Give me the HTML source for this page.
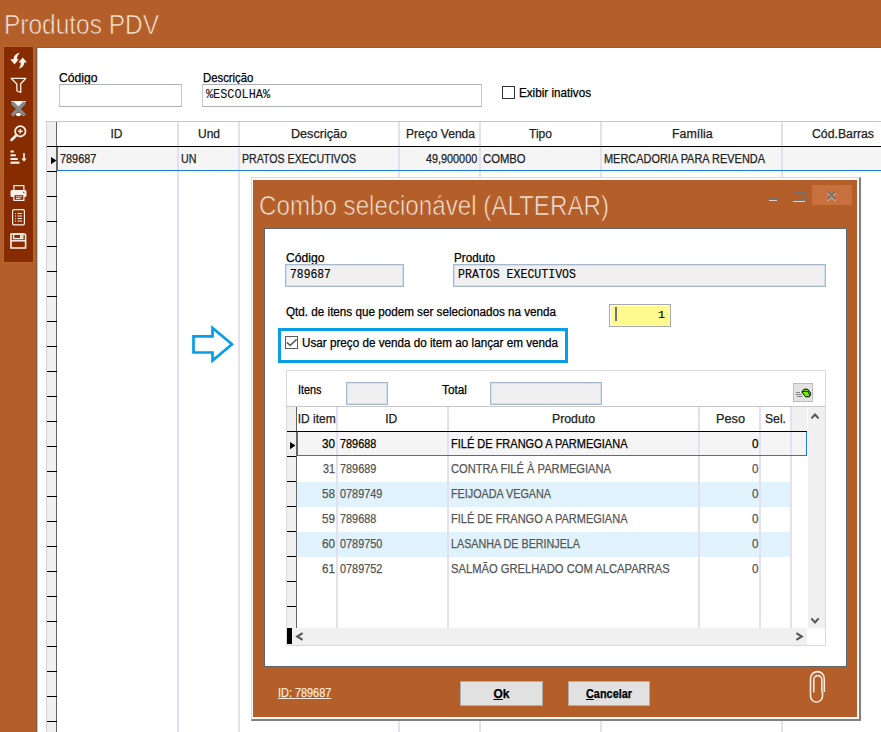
<!DOCTYPE html>
<html><head><meta charset="utf-8"><style>
html,body{margin:0;padding:0;}
body{width:881px;height:732px;overflow:hidden;position:relative;background:#b45e2a;font-family:"Liberation Sans",sans-serif;}
div{box-sizing:border-box;}

</style></head><body>
<div style="position:absolute;left:4.00px;top:12.14px;font:normal 27px 'Liberation Sans', sans-serif;line-height:1;white-space:pre;color:#f7e9de;transform-origin:0 0;transform:scaleX(0.9059);-webkit-text-stroke:0.7px #b45e2a">Produtos PDV</div>
<div style="position:absolute;left:3px;top:46px;width:31px;height:217px;background:#b96430"></div>
<div style="position:absolute;left:4px;top:47px;width:29px;height:215px;background:#862c00"></div>
<svg style="position:absolute;left:0;top:0" width="40" height="270">
<path d="M19.8,52.8 C15.8,53.4 13.6,56 13.6,59.3 L10.2,59.3 L14.5,64.6 L18.8,59.3 L16.9,59.3 C16.9,56.8 18,54.6 19.8,52.8 Z" fill="#fbf1ea"/>
<path d="M18.3,68.8 C22.3,68 24.3,65.6 24.2,62.6 L26.9,62.6 L22.8,57.6 L18.5,62.6 L20.8,62.6 C20.8,65.2 20.1,67.2 18.3,68.8 Z" fill="#fbf1ea"/>
<path d="M11.2,78.3 L25.8,78.3 L20.6,84 L20.8,92.3 L17,91 L16.8,84 Z" fill="none" stroke="#fbf1ea" stroke-width="1.3" stroke-linejoin="round"/>
<path d="M10.7,101 L26.5,101 L18.6,107 Z" fill="#fff"/>
<ellipse cx="18.5" cy="114.5" rx="2.6" ry="1.8" fill="#fff"/>
<path d="M12,102.5 L24.8,115.5 M24.8,102.5 L12,115.5" stroke="#888" stroke-width="3.6"/>
<circle cx="20.3" cy="131.3" r="5.2" fill="none" stroke="#fbf1ea" stroke-width="1.8"/>
<path d="M20.3,129 L20.3,133.6 M18,131.3 L22.6,131.3" stroke="#fbf1ea" stroke-width="1.4"/>
<path d="M16.6,135 L11.5,140" stroke="#fbf1ea" stroke-width="2.5" stroke-linecap="round"/>
<rect x="10.5" y="150.5" width="3.3" height="2" fill="#fbf1ea"/>
<rect x="10.5" y="154.3" width="5.3" height="2" fill="#fbf1ea"/>
<rect x="10.5" y="158" width="7.2" height="2" fill="#fbf1ea"/>
<rect x="10.5" y="161.6" width="9" height="2.2" fill="#fbf1ea"/>
<rect x="23.2" y="153" width="1.6" height="6" fill="#fbf1ea"/>
<path d="M21.4,158.5 L26.6,158.5 L24,161.8 Z" fill="#fbf1ea"/>
<rect x="13.9" y="185.6" width="10" height="5" fill="none" stroke="#fbf1ea" stroke-width="1.2"/>
<rect x="10.5" y="190" width="16" height="7" rx="1.5" fill="#fbf1ea"/>
<circle cx="23.8" cy="192.3" r="0.8" fill="#862c00"/>
<rect x="13.9" y="194.6" width="10" height="5.8" fill="#862c00" stroke="#fbf1ea" stroke-width="1.2"/>
<path d="M16,196.8 h6 M16,198.5 h4.5" stroke="#fbf1ea" stroke-width="0.9"/>
<rect x="12.6" y="209.6" width="11.8" height="15.2" rx="1.3" fill="none" stroke="#fbf1ea" stroke-width="1.2"/>
<path d="M15,213.5 h1 M17.5,213.5 h4.5 M15,216 h1 M17.5,216 h4.5 M15,218.5 h1 M17.5,218.5 h4.5 M15,221 h1 M17.5,221 h4.5" stroke="#fbf1ea" stroke-width="1.1"/>
<path d="M11,234 L24.6,234 L25.6,235 L25.6,248 L11,248 Z" fill="none" stroke="#fbf1ea" stroke-width="1.6"/>
<rect x="13.6" y="234" width="9.2" height="4.6" fill="none" stroke="#fbf1ea" stroke-width="1.4"/>
<rect x="20" y="235" width="1.8" height="3" fill="#fbf1ea"/>
<path d="M11,240.8 h14.6" stroke="#fbf1ea" stroke-width="1.5"/>
</svg>
<div style="position:absolute;left:36px;top:47px;width:845px;height:685px;background:#fff;border-left:1px solid #7c5a48;border-top:1px solid #6b6b6b"></div>
<div style="position:absolute;left:37px;top:48px;width:1px;height:684px;background:#c4cad0"></div>
<div style="position:absolute;left:59.00px;top:71.84px;font:normal 12px 'Liberation Sans', sans-serif;line-height:1;white-space:pre;color:#000;transform-origin:0 0;transform:scaleX(1.0150);-webkit-text-stroke:0.25px #000;">Código</div>
<div style="position:absolute;left:59px;top:84px;width:123px;height:23px;background:#fff;border:1px solid #c6c8ce;border-top-color:#adb0b6;border-bottom-color:#adb0b6"></div>
<div style="position:absolute;left:203.00px;top:71.84px;font:normal 12px 'Liberation Sans', sans-serif;line-height:1;white-space:pre;color:#000;transform-origin:0 0;transform:scaleX(0.9445);-webkit-text-stroke:0.25px #000;">Descrição</div>
<div style="position:absolute;left:202px;top:84px;width:280px;height:23px;background:#fff;border:1px solid #c6c8ce;border-top-color:#adb0b6;border-bottom-color:#adb0b6"></div>
<div style="position:absolute;left:206.00px;top:88.65px;font:normal 12.2px 'Liberation Mono', monospace;line-height:1;white-space:pre;color:#111;transform-origin:0 0;transform:scaleX(0.9722);-webkit-text-stroke:0.1px #111;">%ESCOLHA%</div>
<div style="position:absolute;left:502px;top:86px;width:13px;height:13px;background:#fff;border:1px solid #333"></div>
<div style="position:absolute;left:518.50px;top:87.34px;font:normal 12px 'Liberation Sans', sans-serif;line-height:1;white-space:pre;color:#000;transform-origin:0 0;transform:scaleX(0.9726);-webkit-text-stroke:0.25px #000;">Exibir inativos</div>
<div style="position:absolute;left:46px;top:121px;width:835px;height:611px;background:#fff;border-left:1px solid #cfd2d8;border-top:1px solid #c8c8c8"></div>
<div style="position:absolute;left:47px;top:122px;width:10px;height:611px;background:#f0f0f0"></div>
<div style="position:absolute;left:56px;top:122px;width:1px;height:611px;background:#646464"></div>
<div style="position:absolute;left:177px;top:122px;width:2px;height:611px;background:#e4dff1"></div>
<div style="position:absolute;left:238px;top:122px;width:2px;height:611px;background:#e4dff1"></div>
<div style="position:absolute;left:398px;top:122px;width:2px;height:611px;background:#e4dff1"></div>
<div style="position:absolute;left:479px;top:122px;width:2px;height:611px;background:#e4dff1"></div>
<div style="position:absolute;left:600px;top:122px;width:2px;height:611px;background:#e4dff1"></div>
<div style="position:absolute;left:781px;top:122px;width:2px;height:611px;background:#e4dff1"></div>
<div style="position:absolute;left:47px;top:146px;width:834px;height:1px;background:#000"></div>
<div style="position:absolute;left:57px;top:147px;width:824px;height:24px;background:#f5f5f5"></div>
<div style="position:absolute;left:177px;top:147px;width:2px;height:23px;background:#e4dff1"></div>
<div style="position:absolute;left:238px;top:147px;width:2px;height:23px;background:#e4dff1"></div>
<div style="position:absolute;left:398px;top:147px;width:2px;height:23px;background:#e4dff1"></div>
<div style="position:absolute;left:479px;top:147px;width:2px;height:23px;background:#e4dff1"></div>
<div style="position:absolute;left:600px;top:147px;width:2px;height:23px;background:#e4dff1"></div>
<div style="position:absolute;left:781px;top:147px;width:2px;height:23px;background:#e4dff1"></div>
<div style="position:absolute;left:57px;top:170px;width:824px;height:1px;background:#1a7fd4"></div>
<div style="position:absolute;left:57px;top:147px;width:1px;height:24px;background:#1a7fd4"></div>
<div style="position:absolute;left:47px;top:171px;width:10px;height:1px;background:#000"></div>
<div style="position:absolute;left:47px;top:196px;width:10px;height:1px;background:#000"></div>
<div style="position:absolute;left:47px;top:221px;width:10px;height:1px;background:#000"></div>
<div style="position:absolute;left:47px;top:246px;width:10px;height:1px;background:#000"></div>
<div style="position:absolute;left:47px;top:271px;width:10px;height:1px;background:#000"></div>
<div style="position:absolute;left:47px;top:296px;width:10px;height:1px;background:#000"></div>
<div style="position:absolute;left:47px;top:321px;width:10px;height:1px;background:#000"></div>
<div style="position:absolute;left:47px;top:346px;width:10px;height:1px;background:#000"></div>
<div style="position:absolute;left:47px;top:371px;width:10px;height:1px;background:#000"></div>
<div style="position:absolute;left:47px;top:396px;width:10px;height:1px;background:#000"></div>
<div style="position:absolute;left:47px;top:421px;width:10px;height:1px;background:#000"></div>
<div style="position:absolute;left:47px;top:446px;width:10px;height:1px;background:#000"></div>
<div style="position:absolute;left:47px;top:471px;width:10px;height:1px;background:#000"></div>
<div style="position:absolute;left:47px;top:496px;width:10px;height:1px;background:#000"></div>
<div style="position:absolute;left:47px;top:521px;width:10px;height:1px;background:#000"></div>
<div style="position:absolute;left:47px;top:546px;width:10px;height:1px;background:#000"></div>
<div style="position:absolute;left:47px;top:571px;width:10px;height:1px;background:#000"></div>
<div style="position:absolute;left:47px;top:596px;width:10px;height:1px;background:#000"></div>
<div style="position:absolute;left:47px;top:621px;width:10px;height:1px;background:#000"></div>
<div style="position:absolute;left:47px;top:646px;width:10px;height:1px;background:#000"></div>
<div style="position:absolute;left:47px;top:671px;width:10px;height:1px;background:#000"></div>
<div style="position:absolute;left:47px;top:696px;width:10px;height:1px;background:#000"></div>
<div style="position:absolute;left:47px;top:721px;width:10px;height:1px;background:#000"></div>
<svg style="position:absolute;left:51px;top:156.8px" width="6" height="8"><polygon points="0,0 5.5,3.6 0,7.2" fill="#000"/></svg>
<div style="position:absolute;left:110.50px;top:128.34px;font:normal 12px 'Liberation Sans', sans-serif;line-height:1;white-space:pre;color:#222;transform-origin:0 0;-webkit-text-stroke:0.25px #222;">ID</div>
<div style="position:absolute;left:197.99px;top:128.34px;font:normal 12px 'Liberation Sans', sans-serif;line-height:1;white-space:pre;color:#222;transform-origin:0 0;-webkit-text-stroke:0.25px #222;">Und</div>
<div style="position:absolute;left:291.30px;top:128.34px;font:normal 12px 'Liberation Sans', sans-serif;line-height:1;white-space:pre;color:#222;transform-origin:0 0;transform:scaleX(1.0495);-webkit-text-stroke:0.25px #222;">Descrição</div>
<div style="position:absolute;left:405.50px;top:128.34px;font:normal 12px 'Liberation Sans', sans-serif;line-height:1;white-space:pre;color:#222;transform-origin:0 0;transform:scaleX(1.0041);-webkit-text-stroke:0.25px #222;">Preço Venda</div>
<div style="position:absolute;left:529.05px;top:128.34px;font:normal 12px 'Liberation Sans', sans-serif;line-height:1;white-space:pre;color:#222;transform-origin:0 0;-webkit-text-stroke:0.25px #222;">Tipo</div>
<div style="position:absolute;left:671.70px;top:128.34px;font:normal 12px 'Liberation Sans', sans-serif;line-height:1;white-space:pre;color:#222;transform-origin:0 0;transform:scaleX(1.0319);-webkit-text-stroke:0.25px #222;">Família</div>
<div style="position:absolute;left:812.00px;top:128.34px;font:normal 12px 'Liberation Sans', sans-serif;line-height:1;white-space:pre;color:#222;transform-origin:0 0;transform:scaleX(1.0214);-webkit-text-stroke:0.25px #222;">Cód.Barras</div>
<div style="position:absolute;left:60.00px;top:153.42px;font:normal 12.5px 'Liberation Sans', sans-serif;line-height:1;white-space:pre;color:#222;transform-origin:0 0;transform:scaleX(0.8701);-webkit-text-stroke:0.25px #222;">789687</div>
<div style="position:absolute;left:181.00px;top:153.42px;font:normal 12.5px 'Liberation Sans', sans-serif;line-height:1;white-space:pre;color:#222;transform-origin:0 0;transform:scaleX(0.8581);-webkit-text-stroke:0.25px #222;">UN</div>
<div style="position:absolute;left:242.00px;top:153.42px;font:normal 12.5px 'Liberation Sans', sans-serif;line-height:1;white-space:pre;color:#222;transform-origin:0 0;transform:scaleX(0.8489);-webkit-text-stroke:0.25px #222;">PRATOS EXECUTIVOS</div>
<div style="position:absolute;left:426.20px;top:153.42px;font:normal 12.5px 'Liberation Sans', sans-serif;line-height:1;white-space:pre;color:#222;transform-origin:0 0;transform:scaleX(0.8664);-webkit-text-stroke:0.25px #222;">49,900000</div>
<div style="position:absolute;left:483.00px;top:153.42px;font:normal 12.5px 'Liberation Sans', sans-serif;line-height:1;white-space:pre;color:#222;transform-origin:0 0;transform:scaleX(0.9019);-webkit-text-stroke:0.25px #222;">COMBO</div>
<div style="position:absolute;left:604.00px;top:153.42px;font:normal 12.5px 'Liberation Sans', sans-serif;line-height:1;white-space:pre;color:#222;transform-origin:0 0;transform:scaleX(0.8757);-webkit-text-stroke:0.25px #222;">MERCADORIA PARA REVENDA</div>
<div style="position:absolute;left:251px;top:177px;width:610px;height:544px;background:#fbfbfb;border-top:1px solid #dcdcdc;border-left:1px solid #dcdcdc;border-right:2px solid #808080;border-bottom:2px solid #808080"></div>
<div style="position:absolute;left:253px;top:180px;width:604px;height:537px;background:#b45e2a"></div>
<div style="position:absolute;left:259.00px;top:193.14px;font:normal 27px 'Liberation Sans', sans-serif;line-height:1;white-space:pre;color:#f7e9de;transform-origin:0 0;transform:scaleX(0.8948);-webkit-text-stroke:0.7px #b45e2a">Combo selecionável (ALTERAR)</div>
<div style="position:absolute;left:812px;top:185px;width:40px;height:20px;background:#c8703e"></div>
<div style="position:absolute;left:769px;top:200px;width:8px;height:1px;background:rgba(255,255,255,0.7)"></div>
<div style="position:absolute;left:769px;top:198px;width:8px;height:2px;background:#727272"></div>
<div style="position:absolute;left:793px;top:200px;width:12px;height:1.5px;background:rgba(255,255,255,0.7)"></div>
<div style="position:absolute;left:793px;top:191px;width:12px;height:9.5px;border:1px solid #727272;border-top-width:2px"></div>
<svg style="position:absolute;left:826px;top:190px" width="12" height="12"><path d="M1.5,2.5 L9.5,10.5 M9.5,2.5 L1.5,10.5" stroke="rgba(255,255,255,0.6)" stroke-width="2"/><path d="M1.5,1.5 L9.5,9.5 M9.5,1.5 L1.5,9.5" stroke="#727272" stroke-width="2"/></svg>
<div style="position:absolute;left:264px;top:228px;width:583px;height:439px;background:#fff;border:1px solid #5f666c"></div>
<div style="position:absolute;left:286.00px;top:251.84px;font:normal 12px 'Liberation Sans', sans-serif;line-height:1;white-space:pre;color:#000;transform-origin:0 0;transform:scaleX(1.0123);-webkit-text-stroke:0.25px #000;">Código</div>
<div style="position:absolute;left:285px;top:264px;width:119px;height:23px;background:#f0f0f0;border:1px solid #a7b8cc;box-shadow:inset 0 0 0 1px #d3dfec"></div>
<div style="position:absolute;left:290.00px;top:268.50px;font:normal 12.4px 'Liberation Mono', monospace;line-height:1;white-space:pre;color:#000;transform-origin:0 0;transform:scaleX(0.9165);-webkit-text-stroke:0.15px #000;">789687</div>
<div style="position:absolute;left:453.50px;top:251.84px;font:normal 12px 'Liberation Sans', sans-serif;line-height:1;white-space:pre;color:#000;transform-origin:0 0;transform:scaleX(0.9755);-webkit-text-stroke:0.25px #000;">Produto</div>
<div style="position:absolute;left:453px;top:264px;width:373px;height:23px;background:#f0f0f0;border:1px solid #a7b8cc;box-shadow:inset 0 0 0 1px #d3dfec"></div>
<div style="position:absolute;left:457.70px;top:268.50px;font:normal 12.4px 'Liberation Mono', monospace;line-height:1;white-space:pre;color:#000;transform-origin:0 0;transform:scaleX(0.9335);-webkit-text-stroke:0.15px #000;">PRATOS EXECUTIVOS</div>
<div style="position:absolute;left:286.00px;top:306.34px;font:normal 12px 'Liberation Sans', sans-serif;line-height:1;white-space:pre;color:#000;transform-origin:0 0;transform:scaleX(0.9729);-webkit-text-stroke:0.25px #000;">Qtd. de itens que podem ser selecionados na venda</div>
<div style="position:absolute;left:609px;top:304px;width:62px;height:23px;background:#fffa90;border:1px solid #a8a8b0;box-shadow:inset 0 0 0 1px #fff"></div>
<div style="position:absolute;left:615px;top:307px;width:2px;height:14px;background:#707080"></div>
<div style="position:absolute;left:658.03px;top:309.11px;font:normal 11.6px 'Liberation Mono', monospace;line-height:1;white-space:pre;color:#000;transform-origin:0 0;-webkit-text-stroke:0.2px #000;">1</div>
<div style="position:absolute;left:278px;top:328px;width:290px;height:35px;border:3px solid #0a9ee6"></div>
<div style="position:absolute;left:285px;top:336px;width:13px;height:13px;background:#fff;border:1px solid #5a5a5a"></div>
<svg style="position:absolute;left:285px;top:336px" width="13" height="13"><path d="M1.8,6.3 L5.2,9.4 L11.6,3.3" stroke="#606060" stroke-width="1.6" fill="none"/></svg>
<div style="position:absolute;left:302.00px;top:337.34px;font:normal 12px 'Liberation Sans', sans-serif;line-height:1;white-space:pre;color:#000;transform-origin:0 0;transform:scaleX(0.9740);-webkit-text-stroke:0.25px #000;">Usar preço de venda do item ao lançar em venda</div>
<svg style="position:absolute;left:185px;top:320px" width="60" height="50"><polygon points="8.5,16.4 27.5,16.4 27.5,8 47,24.3 27.5,40.5 27.5,32.5 8.5,32.5" stroke="#0a9ee6" stroke-width="2.7" fill="none" stroke-linejoin="miter"/></svg>
<div style="position:absolute;left:286px;top:370px;width:540px;height:276px;background:#fff;border:1px solid #d9d9d9"></div>
<div style="position:absolute;left:297.70px;top:383.84px;font:normal 12px 'Liberation Sans', sans-serif;line-height:1;white-space:pre;color:#000;transform-origin:0 0;transform:scaleX(0.9033);-webkit-text-stroke:0.25px #000;">Itens</div>
<div style="position:absolute;left:346px;top:382px;width:42px;height:23px;background:#f0f0f0;border:1px solid #a7b8cc;box-shadow:inset 0 0 0 1px #d3dfec"></div>
<div style="position:absolute;left:442.00px;top:383.84px;font:normal 12px 'Liberation Sans', sans-serif;line-height:1;white-space:pre;color:#000;transform-origin:0 0;transform:scaleX(0.9858);-webkit-text-stroke:0.25px #000;">Total</div>
<div style="position:absolute;left:490px;top:382px;width:112px;height:23px;background:#f0f0f0;border:1px solid #a7b8cc;box-shadow:inset 0 0 0 1px #d3dfec"></div>
<div style="position:absolute;left:793px;top:383px;width:20px;height:19px;background:#e3e3e3;border:1px solid #bdbdbd"></div>
<svg style="position:absolute;left:0;top:0" width="881" height="732"><path d="M796,392.5 h4 M795.5,394.5 h6 M797,396.5 h5.5" stroke="#555" stroke-width="0.7"/><polygon points="801.8,392 804,389.2 807.6,389.2 810.8,393.2 809.4,396.8 805.6,396.8" fill="#70f000" stroke="#000" stroke-width="1"/><path d="M802.3,391.4 L808.5,391.4 M808,391.6 L810.2,396" stroke="#0a3000" stroke-width="1"/></svg>
<div style="position:absolute;left:286px;top:406px;width:539px;height:1px;background:#c8c8c8"></div>
<div style="position:absolute;left:287px;top:407px;width:9px;height:221px;background:#f0f0f0"></div>
<div style="position:absolute;left:296px;top:407px;width:1px;height:221px;background:#646464"></div>
<div style="position:absolute;left:791px;top:407px;width:16px;height:25px;background:#f0f0f0"></div>
<div style="position:absolute;left:297px;top:432px;width:510px;height:24px;background:#f5f5f5"></div>
<div style="position:absolute;left:321.50px;top:438.12px;font:normal 12.5px 'Liberation Sans', sans-serif;line-height:1;white-space:pre;color:#000;transform-origin:0 0;transform:scaleX(0.9348);-webkit-text-stroke:0.25px #000;">30</div>
<div style="position:absolute;left:340.00px;top:438.12px;font:normal 12.5px 'Liberation Sans', sans-serif;line-height:1;white-space:pre;color:#000;transform-origin:0 0;transform:scaleX(0.8701);-webkit-text-stroke:0.25px #000;">789688</div>
<div style="position:absolute;left:451.00px;top:438.12px;font:normal 12.5px 'Liberation Sans', sans-serif;line-height:1;white-space:pre;color:#000;transform-origin:0 0;transform:scaleX(0.8802);-webkit-text-stroke:0.25px #000;">FILÉ DE FRANGO A PARMEGIANA</div>
<div style="position:absolute;left:751.50px;top:438.12px;font:normal 12.5px 'Liberation Sans', sans-serif;line-height:1;white-space:pre;color:#000;transform-origin:0 0;transform:scaleX(0.9348);-webkit-text-stroke:0.25px #000;">0</div>
<div style="position:absolute;left:322.50px;top:463.12px;font:normal 12.5px 'Liberation Sans', sans-serif;line-height:1;white-space:pre;color:#555;transform-origin:0 0;transform:scaleX(0.8629);-webkit-text-stroke:0.25px #555;">31</div>
<div style="position:absolute;left:340.00px;top:463.12px;font:normal 12.5px 'Liberation Sans', sans-serif;line-height:1;white-space:pre;color:#555;transform-origin:0 0;transform:scaleX(0.8701);-webkit-text-stroke:0.25px #555;">789689</div>
<div style="position:absolute;left:451.00px;top:463.12px;font:normal 12.5px 'Liberation Sans', sans-serif;line-height:1;white-space:pre;color:#555;transform-origin:0 0;transform:scaleX(0.8905);-webkit-text-stroke:0.25px #555;">CONTRA FILÉ À PARMEGIANA</div>
<div style="position:absolute;left:751.50px;top:463.12px;font:normal 12.5px 'Liberation Sans', sans-serif;line-height:1;white-space:pre;color:#555;transform-origin:0 0;transform:scaleX(0.9348);-webkit-text-stroke:0.25px #555;">0</div>
<div style="position:absolute;left:297px;top:482px;width:494px;height:25px;background:#e0f3fd"></div>
<div style="position:absolute;left:321.50px;top:488.12px;font:normal 12.5px 'Liberation Sans', sans-serif;line-height:1;white-space:pre;color:#555;transform-origin:0 0;transform:scaleX(0.9348);-webkit-text-stroke:0.25px #555;">58</div>
<div style="position:absolute;left:340.00px;top:488.12px;font:normal 12.5px 'Liberation Sans', sans-serif;line-height:1;white-space:pre;color:#555;transform-origin:0 0;transform:scaleX(0.8691);-webkit-text-stroke:0.25px #555;">0789749</div>
<div style="position:absolute;left:451.00px;top:488.12px;font:normal 12.5px 'Liberation Sans', sans-serif;line-height:1;white-space:pre;color:#555;transform-origin:0 0;transform:scaleX(0.8620);-webkit-text-stroke:0.25px #555;">FEIJOADA VEGANA</div>
<div style="position:absolute;left:751.50px;top:488.12px;font:normal 12.5px 'Liberation Sans', sans-serif;line-height:1;white-space:pre;color:#555;transform-origin:0 0;transform:scaleX(0.9348);-webkit-text-stroke:0.25px #555;">0</div>
<div style="position:absolute;left:321.50px;top:513.12px;font:normal 12.5px 'Liberation Sans', sans-serif;line-height:1;white-space:pre;color:#555;transform-origin:0 0;transform:scaleX(0.9348);-webkit-text-stroke:0.25px #555;">59</div>
<div style="position:absolute;left:340.00px;top:513.12px;font:normal 12.5px 'Liberation Sans', sans-serif;line-height:1;white-space:pre;color:#555;transform-origin:0 0;transform:scaleX(0.8701);-webkit-text-stroke:0.25px #555;">789688</div>
<div style="position:absolute;left:451.00px;top:513.12px;font:normal 12.5px 'Liberation Sans', sans-serif;line-height:1;white-space:pre;color:#555;transform-origin:0 0;transform:scaleX(0.8802);-webkit-text-stroke:0.25px #555;">FILÉ DE FRANGO A PARMEGIANA</div>
<div style="position:absolute;left:751.50px;top:513.12px;font:normal 12.5px 'Liberation Sans', sans-serif;line-height:1;white-space:pre;color:#555;transform-origin:0 0;transform:scaleX(0.9348);-webkit-text-stroke:0.25px #555;">0</div>
<div style="position:absolute;left:297px;top:532px;width:494px;height:25px;background:#e0f3fd"></div>
<div style="position:absolute;left:321.50px;top:538.12px;font:normal 12.5px 'Liberation Sans', sans-serif;line-height:1;white-space:pre;color:#555;transform-origin:0 0;transform:scaleX(0.9348);-webkit-text-stroke:0.25px #555;">60</div>
<div style="position:absolute;left:340.00px;top:538.12px;font:normal 12.5px 'Liberation Sans', sans-serif;line-height:1;white-space:pre;color:#555;transform-origin:0 0;transform:scaleX(0.8691);-webkit-text-stroke:0.25px #555;">0789750</div>
<div style="position:absolute;left:451.00px;top:538.12px;font:normal 12.5px 'Liberation Sans', sans-serif;line-height:1;white-space:pre;color:#555;transform-origin:0 0;transform:scaleX(0.8596);-webkit-text-stroke:0.25px #555;">LASANHA DE BERINJELA</div>
<div style="position:absolute;left:751.50px;top:538.12px;font:normal 12.5px 'Liberation Sans', sans-serif;line-height:1;white-space:pre;color:#555;transform-origin:0 0;transform:scaleX(0.9348);-webkit-text-stroke:0.25px #555;">0</div>
<div style="position:absolute;left:321.50px;top:563.12px;font:normal 12.5px 'Liberation Sans', sans-serif;line-height:1;white-space:pre;color:#555;transform-origin:0 0;transform:scaleX(0.9348);-webkit-text-stroke:0.25px #555;">61</div>
<div style="position:absolute;left:340.00px;top:563.12px;font:normal 12.5px 'Liberation Sans', sans-serif;line-height:1;white-space:pre;color:#555;transform-origin:0 0;transform:scaleX(0.8691);-webkit-text-stroke:0.25px #555;">0789752</div>
<div style="position:absolute;left:451.00px;top:563.12px;font:normal 12.5px 'Liberation Sans', sans-serif;line-height:1;white-space:pre;color:#555;transform-origin:0 0;transform:scaleX(0.8953);-webkit-text-stroke:0.25px #555;">SALMÃO GRELHADO COM ALCAPARRAS</div>
<div style="position:absolute;left:751.50px;top:563.12px;font:normal 12.5px 'Liberation Sans', sans-serif;line-height:1;white-space:pre;color:#555;transform-origin:0 0;transform:scaleX(0.9348);-webkit-text-stroke:0.25px #555;">0</div>
<div style="position:absolute;left:336px;top:407px;width:2px;height:221px;background:#e4dff1"></div>
<div style="position:absolute;left:447px;top:407px;width:2px;height:221px;background:#e4dff1"></div>
<div style="position:absolute;left:698px;top:407px;width:2px;height:221px;background:#e4dff1"></div>
<div style="position:absolute;left:759px;top:407px;width:2px;height:221px;background:#e4dff1"></div>
<div style="position:absolute;left:790px;top:407px;width:2px;height:221px;background:#e4dff1"></div>
<div style="position:absolute;left:287px;top:431px;width:520px;height:1px;background:#000"></div>
<div style="position:absolute;left:297px;top:455px;width:510px;height:1px;background:#1a7fd4"></div>
<div style="position:absolute;left:806px;top:432px;width:1px;height:24px;background:#1a7fd4"></div>
<div style="position:absolute;left:297px;top:432px;width:1px;height:24px;background:#1a7fd4"></div>
<div style="position:absolute;left:287px;top:456px;width:9px;height:1px;background:#000"></div>
<div style="position:absolute;left:287px;top:481px;width:9px;height:1px;background:#000"></div>
<div style="position:absolute;left:287px;top:506px;width:9px;height:1px;background:#000"></div>
<div style="position:absolute;left:287px;top:531px;width:9px;height:1px;background:#000"></div>
<div style="position:absolute;left:287px;top:556px;width:9px;height:1px;background:#000"></div>
<div style="position:absolute;left:287px;top:581px;width:9px;height:1px;background:#000"></div>
<div style="position:absolute;left:287px;top:606px;width:9px;height:1px;background:#000"></div>
<svg style="position:absolute;left:290px;top:441.5px" width="6" height="8"><polygon points="0,0 5.5,3.6 0,7.2" fill="#000"/></svg>
<div style="position:absolute;left:297.70px;top:412.84px;font:normal 12px 'Liberation Sans', sans-serif;line-height:1;white-space:pre;color:#222;transform-origin:0 0;-webkit-text-stroke:0.25px #222;">ID item</div>
<div style="position:absolute;left:385.20px;top:412.84px;font:normal 12px 'Liberation Sans', sans-serif;line-height:1;white-space:pre;color:#222;transform-origin:0 0;-webkit-text-stroke:0.25px #222;">ID</div>
<div style="position:absolute;left:552.30px;top:412.84px;font:normal 12px 'Liberation Sans', sans-serif;line-height:1;white-space:pre;color:#222;transform-origin:0 0;transform:scaleX(1.0230);-webkit-text-stroke:0.25px #222;">Produto</div>
<div style="position:absolute;left:715.50px;top:412.84px;font:normal 12px 'Liberation Sans', sans-serif;line-height:1;white-space:pre;color:#222;transform-origin:0 0;transform:scaleX(1.0600);-webkit-text-stroke:0.25px #222;">Peso</div>
<div style="position:absolute;left:765.30px;top:412.84px;font:normal 12px 'Liberation Sans', sans-serif;line-height:1;white-space:pre;color:#222;transform-origin:0 0;transform:scaleX(1.0151);-webkit-text-stroke:0.25px #222;">Sel.</div>
<div style="position:absolute;left:808px;top:407px;width:17px;height:221px;background:#f0f0f0"></div>
<div style="position:absolute;left:287px;top:628px;width:520px;height:17px;background:#f0f0f0"></div>
<div style="position:absolute;left:287px;top:628px;width:5px;height:16px;background:#000"></div>
<svg style="position:absolute;left:0;top:0" width="881" height="732"><path d="M811.4,418.4 L815,414.6 L818.6,418.4" stroke="#585858" stroke-width="2.1" fill="none"/><path d="M811.3,618.4 L815,622.4 L818.7,618.4" stroke="#585858" stroke-width="2.1" fill="none"/><path d="M302.6,633.2 L297.2,636.5 L302.6,639.8" stroke="#585858" stroke-width="2.1" fill="none"/><path d="M796.4,633.2 L801.8,636.5 L796.4,639.8" stroke="#585858" stroke-width="2.1" fill="none"/></svg>
<div style="position:absolute;left:278.00px;top:686.84px;font:normal 12px 'Liberation Sans', sans-serif;line-height:1;white-space:pre;color:#f7e9de;transform-origin:0 0;transform:scaleX(0.9077);-webkit-text-stroke:0.25px #f7e9de;text-decoration:underline;text-underline-offset:1px">ID: 789687</div>
<div style="position:absolute;left:460px;top:681px;width:83px;height:25px;background:#e1e1e1;border:1px solid #adadad"></div>
<div style="position:absolute;left:568px;top:681px;width:82px;height:25px;background:#e1e1e1;border:1px solid #adadad"></div>
<div style="position:absolute;left:493.48px;top:687.84px;font:bold 12px 'Liberation Sans', sans-serif;line-height:1;white-space:pre;color:#000;transform-origin:0 0;-webkit-text-stroke:0.25px #000;"><u>O</u>k</div>
<div style="position:absolute;left:586.30px;top:687.84px;font:bold 12px 'Liberation Sans', sans-serif;line-height:1;white-space:pre;color:#000;transform-origin:0 0;transform:scaleX(0.9072);-webkit-text-stroke:0.25px #000;"><u>C</u>ancelar</div>
<svg style="position:absolute;left:0;top:0" width="881" height="732"><path d="M824.3,692 L824.3,678.5 A6.9,6.9 0 0 0 810.5,678.5 L810.5,696 A6,6 0 0 0 822.5,696 L822.5,692 M813.8,692.5 L813.8,679.6 A4,4 0 0 1 821.8,679.6 L821.8,692.2" stroke="#f8ebe2" stroke-width="1.6" fill="none"/></svg>
</body></html>
